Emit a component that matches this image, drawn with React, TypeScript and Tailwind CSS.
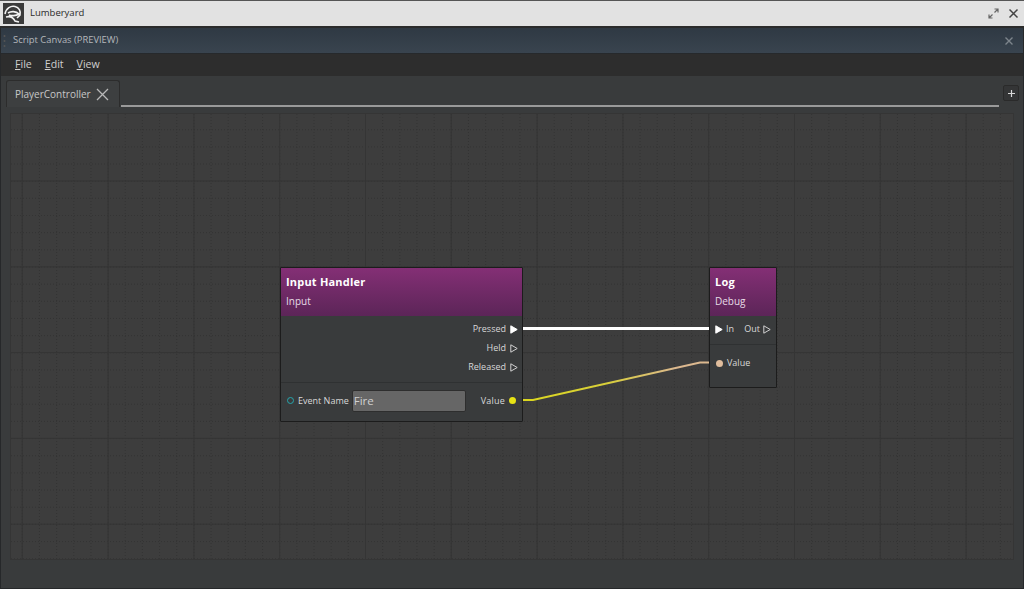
import React from 'react';

const FONT = "font-['Open_Sans',sans-serif]";

const majorX = Array.from({ length: 12 }, (_, i) => 11.3 + i * 85.8);
const majorY = Array.from({ length: 5 }, (_, i) => 67 + i * 85.8);
const minorX = Array.from({ length: 59 }, (_, i) => 11.3 + i * 17.16);
const minorY = Array.from({ length: 26 }, (_, i) => 15.7 + i * 17.16);

const Flow: React.FC<{ filled?: boolean }> = ({ filled }) => (
  <svg width="8" height="9" viewBox="0 0 8 9" className="shrink-0">
    <path
      d="M0.8 0.8 L7.2 4.5 L0.8 8.2 Z"
      fill={filled ? '#ffffff' : 'none'}
      stroke={filled ? '#ffffff' : '#d0d0d0'}
      strokeWidth="1"
    />
  </svg>
);

const Dot: React.FC<{ className: string }> = ({ className }) => (
  <span className={`block w-[7px] h-[7px] rounded-full shrink-0 ${className}`} />
);

const Grid: React.FC = () => (
  <svg width="1002" height="445" className="absolute inset-0">
    {minorX.map(x => (
      <line key={x} x1={x} x2={x} y1="0" y2="445" stroke="#343434" strokeDasharray="1 2" />
    ))}
    {minorY.map(y => (
      <line key={y} x1="0" x2="1002" y1={y} y2={y} stroke="#343434" strokeDasharray="1 2" />
    ))}
    {majorX.map(x => (
      <line key={x} x1={x} x2={x} y1="0" y2="445" stroke="#353535" />
    ))}
    {majorY.map(y => (
      <line key={y} x1="0" x2="1002" y1={y} y2={y} stroke="#353535" />
    ))}
  </svg>
);

const Wires: React.FC = () => (
  <svg width="1002" height="445" className="absolute inset-0">
    <defs>
      <linearGradient id="wire" x1="0" x2="1" y1="0" y2="0">
        <stop offset="0" stopColor="#dcd81c" />
        <stop offset="0.45" stopColor="#d8cf3a" />
        <stop offset="0.8" stopColor="#dcb88f" />
        <stop offset="1" stopColor="#dcb88f" />
      </linearGradient>
    </defs>
    <line x1="507" x2="701" y1="214.5" y2="214.5" stroke="#ffffff" strokeWidth="3" />
    <path d="M506 286 L522 286 L689 248.5 L705 248.5" fill="none" stroke="url(#wire)" strokeWidth="2" />
  </svg>
);

const NodeHeader: React.FC<{ title: string; sub: string }> = ({ title, sub }) => (
  <div className="h-[48px] bg-gradient-to-b from-[#842f75] to-[#5c2558] px-[5px] pt-[5px] text-white">
    <div className="text-[11px] leading-[17px] font-bold tracking-[0.2px]">{title}</div>
    <div className="text-[10px] leading-[14px] mt-[4px] text-[#e6dce6]">{sub}</div>
  </div>
);

const App: React.FC = () => {
  return (
    <div className={`w-[1024px] h-[589px] flex flex-col overflow-hidden bg-[#393b3c] ${FONT}`}>
      {/* app title bar */}
      <div className="h-[28px] shrink-0 flex items-center bg-[#e2e2e2] border-t border-[#555] border-b-2 border-b-[#2b2b2b]">
        <svg width="21" height="21" viewBox="0 0 21 21" className="ml-[3px] shrink-0">
          <rect width="21" height="21" fill="#3a3a3a" />
          <path
            d="M2 11 C3 5 8 2.5 12 3.5 C16 4.5 18 8 17 12 L14 15 M5 10 C8 8 13 8 16 11 C13 13 8 13 6 12 M3 14 C7 13 10 14 12 18 L16 19"
            fill="none"
            stroke="#f2f2f2"
            strokeWidth="1.6"
          />
        </svg>
        <span className="ml-[6px] text-[9.5px] text-[#2a2a2a]">Lumberyard</span>
        <div className="ml-auto flex items-center gap-[9px] pr-[5px]">
          <svg width="11" height="11" viewBox="0 0 11 11">
            <path d="M6.5 1 H10 V4.5 M10 1 L6.5 4.5 M4.5 10 H1 V6.5 M1 10 L4.5 6.5" fill="none" stroke="#666" strokeWidth="1.2" />
          </svg>
          <svg width="11" height="11" viewBox="0 0 11 11">
            <path d="M1.5 1.5 L9.5 9.5 M9.5 1.5 L1.5 9.5" stroke="#444" strokeWidth="1.5" />
          </svg>
        </div>
      </div>

      <div className="flex-1 flex flex-col border-x border-b border-[#26282a]">
        {/* panel title */}
        <div className="h-[26px] shrink-0 flex items-center bg-gradient-to-b from-[#2f3943] to-[#39444f] border-b border-[#26292c]">
          <svg width="5" height="16" viewBox="0 0 5 16" className="ml-[1px] shrink-0">
            <circle cx="2.5" cy="3" r="1" fill="#555" />
            <circle cx="2.5" cy="8" r="1" fill="#555" />
            <circle cx="2.5" cy="13" r="1" fill="#555" />
          </svg>
          <span className="ml-[6px] text-[9.4px] text-[#b4b8bc]">Script Canvas (PREVIEW)</span>
          <svg width="10" height="10" viewBox="0 0 10 10" className="ml-auto mr-[9px]">
            <path d="M1.5 1.5 L8.5 8.5 M8.5 1.5 L1.5 8.5" stroke="#7d858c" strokeWidth="1.4" />
          </svg>
        </div>

        {/* menu */}
        <div className="h-[22px] shrink-0 flex items-center gap-[13px] pl-[14px] bg-[#2d2d2d] text-[10.6px] text-[#cfcfcf]">
          <span><u>F</u>ile</span>
          <span><u>E</u>dit</span>
          <span><u>V</u>iew</span>
        </div>

        {/* tabs */}
        <div className="h-[37px] shrink-0 flex items-start pt-[4px] pl-[5px] pr-[4px] bg-[#393b3c]">
          <div className="h-[27px] w-[114px] flex items-center gap-[5px] pl-[8px] bg-[#3d3f40] border border-b-0 border-[#2c2c2c] rounded-t-[3px] text-[10px] text-[#c8c8c8]">
            PlayerController
            <svg width="13" height="13" viewBox="0 0 13 13">
              <path d="M1 1 L12 12 M12 1 L1 12" stroke="#b8b8b8" strokeWidth="1.3" />
            </svg>
          </div>
          <div className="ml-[1px] mt-[25px] w-[878px] h-[2px] bg-[#9a9a9a]" />
          <div className="ml-auto mt-[5px] w-[16px] h-[16px] flex items-center justify-center rounded-[2px] bg-[#343536] border border-[#2a2a2a]">
            <svg width="7" height="7" viewBox="0 0 7 7">
              <path d="M3.5 0 V7 M0 3.5 H7" stroke="#d8d8d8" strokeWidth="1.2" />
            </svg>
          </div>
        </div>

        {/* canvas */}
        <div className="relative ml-[9px] w-[1004px] h-[447px] bg-[#3d3d3d] border border-[#353535] shrink-0">
          <Grid />
          <Wires />

          <div className="absolute left-[269px] top-[153px] w-[243px] h-[155px] bg-[#393b3c] border border-[#1c1c1c] rounded-[1px] text-[#d8d8d8]">
            <NodeHeader title="Input Handler" sub="Input" />
            <div className="flex flex-col items-end gap-[7px] pt-[7px] pr-[4px] h-[67px] border-b border-[#2f3132] text-[9px] leading-[12px]">
              <div className="flex items-center gap-[4px]">Pressed <Flow filled /></div>
              <div className="flex items-center gap-[4px]">Held <Flow /></div>
              <div className="flex items-center gap-[4px]">Released <Flow /></div>
            </div>
            <div className="flex items-center h-[37px] pl-[6px] pr-[6px] pb-[2px] text-[9px]">
              <Dot className="border-[1.5px] border-[#26a6ad] bg-transparent" />
              <span className="ml-[4px]">Event Name</span>
              <div className="ml-[3px] w-[114px] h-[22px] flex items-center pl-[1px] bg-[#666666] border border-[#2e2e2e] rounded-[2px] text-[11.5px] text-[#d0d0d0]">Fire</div>
              <span className="ml-auto tracking-[0.2px]">Value</span>
              <Dot className="ml-[4px] bg-[#e6e214]" />
            </div>
          </div>

          <div className="absolute left-[698px] top-[153px] w-[68px] h-[121px] bg-[#393b3c] border border-[#1c1c1c] rounded-[1px] text-[#d8d8d8]">
            <NodeHeader title="Log" sub="Debug" />
            <div className="flex items-center h-[29px] pl-[5px] pr-[5px] pb-[2px] border-b border-[#2f3132] text-[9px]">
              <Flow filled />
              <span className="ml-[3px]">In</span>
              <span className="ml-auto mr-[3px]">Out</span>
              <Flow />
            </div>
            <div className="flex items-center h-[36px] pl-[6px] text-[9px]">
              <Dot className="bg-[#e0bd9d]" />
              <span className="ml-[4px]">Value</span>
            </div>
          </div>
        </div>
      </div>
    </div>
  );
};

export default App;
